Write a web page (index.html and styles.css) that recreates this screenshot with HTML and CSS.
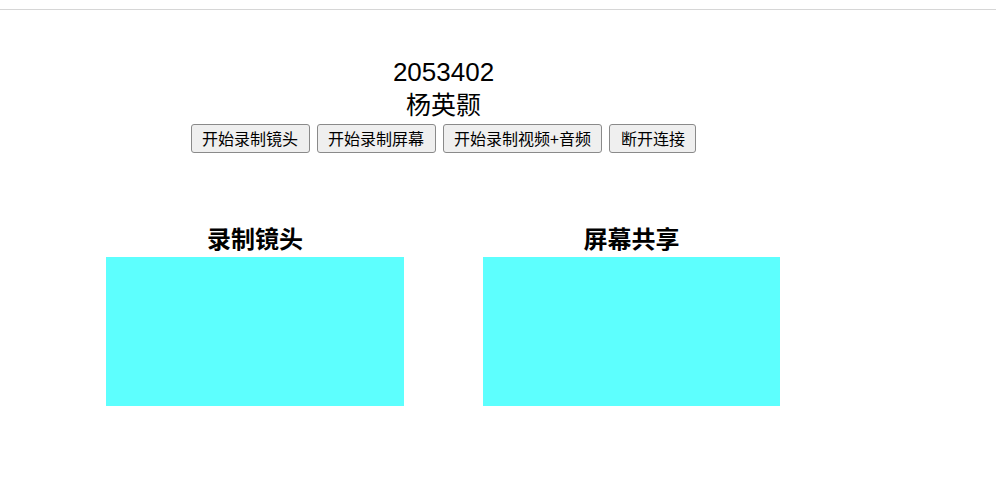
FILE: index.html
```html
<!DOCTYPE html>
<html lang="zh">
<head>
<meta charset="utf-8">
<title>录制</title>
<link rel="stylesheet" href="styles.css">
</head>
<body>
<div class="topbar"></div>
<div class="wrap">
  <div class="info">
    <div class="num">2053402</div>
    <div class="name">杨英颢</div>
    <div class="buttons">
      <button class="btn">开始录制镜头</button>
      <button class="btn">开始录制屏幕</button>
      <button class="btn">开始录制视频+音频</button>
      <button class="btn">断开连接</button>
    </div>
  </div>
  <div class="panels">
    <div class="panel">
      <h2 class="title">录制镜头</h2>
      <div class="video v1"></div>
    </div>
    <div class="panel">
      <h2 class="title">屏幕共享</h2>
      <div class="video v2"></div>
    </div>
  </div>
</div>
</body>
</html>
```

FILE: styles.css
```css
html, body {
  margin: 0;
  padding: 0;
  background: #ffffff;
  color: #000000;
  font-family: "Noto Sans CJK SC", "Noto Sans", sans-serif;
}
.topbar {
  margin-top: 9px;
  height: 1px;
  background: #d6d6d6;
}
.wrap {
  width: 887px;
}
.info {
  padding-top: 46px;
  display: flex;
  flex-direction: column;
  align-items: center;
}
.num {
  font-family: "Liberation Sans", "Noto Sans CJK SC", sans-serif;
  font-size: 26px;
  line-height: 33px;
}
.name {
  font-family: "Liberation Sans", "Noto Sans CJK SC", sans-serif;
  font-size: 25px;
  line-height: 32px;
}
.buttons {
  margin-top: 3px;
  display: flex;
  gap: 7px;
}
.btn {
  font-family: "Noto Sans CJK SC", "Noto Sans", sans-serif;
  font-size: 16px;
  height: 29px;
  line-height: 27px;
  padding: 0 10.5px;
  margin: 0;
  background: #efefef;
  border: 1px solid #8a8a8a;
  border-radius: 3px;
  color: #000;
}
.panels {
  margin-top: 70px;
  display: flex;
  padding-left: 106px;
  gap: 79px;
}
.panel {
  display: flex;
  flex-direction: column;
  align-items: center;
}
.title {
  margin: 0 0 4px 0;
  font-size: 24px;
  line-height: 30px;
  font-weight: bold;
}
.video {
  height: 149px;
  background: #5dfffe;
}
.v1 { width: 298px; }
.v2 { width: 297px; }
```
